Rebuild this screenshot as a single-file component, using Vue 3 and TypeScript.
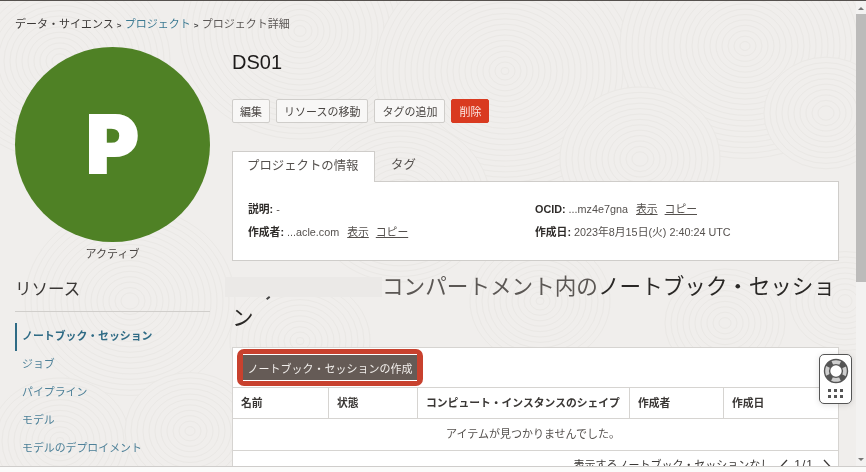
<script setup lang="ts">
// swirls of the page's background texture: each one paints over the ones before it
const swirls = [
  { x: 60, y: 60, r: 110 },
  { x: 300, y: 30, r: 120 },
  { x: 505, y: 70, r: 130 },
  { x: 745, y: 45, r: 125 },
  { x: 826, y: 112, r: 62 },
  { x: 640, y: 158, r: 80 },
  { x: 400, y: 200, r: 90 },
  { x: 130, y: 300, r: 105 },
  { x: 300, y: 340, r: 70 },
  { x: 60, y: 440, r: 70 },
  { x: 190, y: 430, r: 65 },
  { x: 725, y: 322, r: 60 },
  { x: 540, y: 300, r: 70 },
  { x: 845, y: 300, r: 55 }
]
const rings = swirls.flatMap((s) => {
  const out = []
  for (let r = s.r; r > 3; r -= 6) out.push({ cx: s.x, cy: s.y, rx: r, ry: r * 0.9 })
  return out
})

const navItems = ['ノートブック・セッション', 'ジョブ', 'パイプライン', 'モデル', 'モデルのデプロイメント']
const columns = [
  { label: '名前', width: 96 },
  { label: '状態', width: 89 },
  { label: 'コンピュート・インスタンスのシェイプ', width: 212 },
  { label: '作成者', width: 94 },
  { label: '作成日', width: 114 }
]
</script>

<template>
  <div class="screen">
    <div class="topline"></div>
    <div class="window">
      <div class="viewport">
        <svg class="texture" width="856" height="466" aria-hidden="true">
          <ellipse v-for="(c, i) in rings" :key="i" :cx="c.cx" :cy="c.cy" :rx="c.rx" :ry="c.ry" />
        </svg>

        <nav class="crumbs">
          データ・サイエンス<span class="sep">&gt;</span><a class="link">プロジェクト</a><span class="sep">&gt;</span><span class="muted">プロジェクト詳細</span>
        </nav>

        <div class="columns">
          <aside class="side">
            <div class="avatar">P</div>
            <div class="status">アクティブ</div>
            <h2 class="side-title">リソース</h2>
            <ul class="nav">
              <li v-for="(item, i) in navItems" :key="item" :class="{ active: i === 0 }">{{ item }}</li>
            </ul>
          </aside>

          <main class="content">
            <h1 class="title">DS01</h1>
            <div class="actions">
              <button class="btn">編集</button>
              <button class="btn">リソースの移動</button>
              <button class="btn">タグの追加</button>
              <button class="btn danger">削除</button>
            </div>

            <div class="tabs">
              <div class="tab current">プロジェクトの情報</div>
              <div class="tab">タグ</div>
            </div>
            <div class="info">
              <div class="info-col">
                <p><b>説明:</b> -</p>
                <p><b>作成者:</b> ...acle.com<a class="act first">表示</a><a class="act">コピー</a></p>
              </div>
              <div class="info-col">
                <p><b>OCID:</b> ...mz4e7gna<a class="act first">表示</a><a class="act">コピー</a></p>
                <p><b>作成日:</b> 2023年8月15日(火) 2:40:24 UTC</p>
              </div>
            </div>

            <h2 class="heading"><span class="redact"><i></i></span>コンパートメント内の<span class="dark">ノートブック・セッション</span></h2>

            <section class="table-card">
              <div class="toolbar">
                <div class="highlight">
                  <button class="create">ノートブック・セッションの作成</button>
                </div>
              </div>
              <div class="row head">
                <div v-for="c in columns" :key="c.label" class="cell" :style="{ width: c.width + 'px' }">{{ c.label }}</div>
              </div>
              <div class="row empty">アイテムが見つかりませんでした。</div>
              <div class="pager">
                表示するノートブック・セッションなし
                <svg class="chev" width="12" height="12" viewBox="0 0 12 12"><path d="M9 1 3 7.5" /></svg>
                <span class="count">1/1</span>
                <svg class="chev" width="12" height="12" viewBox="0 0 12 12"><path d="M3 1 9 7.5" /></svg>
              </div>
            </section>
          </main>
        </div>

        <div class="help" aria-hidden="true">
          <svg width="26" height="26" viewBox="0 0 26 26">
            <circle cx="13" cy="13" r="9" fill="none" stroke="#cfcfcf" stroke-width="5" />
            <circle class="wedges" cx="13" cy="13" r="9" />
            <circle cx="13" cy="13" r="11.5" fill="none" stroke="#555" stroke-width="1.4" />
            <circle cx="13" cy="13" r="6.4" fill="none" stroke="#555" stroke-width="1.4" />
          </svg>
          <div class="dots"><span v-for="n in 6" :key="n"></span></div>
        </div>
      </div>

      <div class="scrollbar">
        <span class="arrow up"></span>
        <div class="track"><div class="thumb"></div></div>
        <span class="arrow down"></span>
      </div>
    </div>
    <div class="bottom"></div>
  </div>
</template>

<style>
html, body { margin: 0; background: #f0eeec; }
</style>

<style scoped>
.screen {
  width: 866px;
  height: 472px;
  display: flex;
  flex-direction: column;
  overflow: hidden;
  font-family: "Liberation Sans", "Noto Sans CJK JP", sans-serif;
  color: #2f2c2a;
  filter: blur(0.4px);
}
.topline { height: 1px; background: #55514e; flex: none; }
.window { flex: 1; display: flex; min-height: 0; }
.bottom { height: 5px; flex: none; background: #fbfbfa; border-top: 1px solid #cfcdcb; }

.viewport {
  position: relative;
  flex: 1;
  overflow: hidden;
  background: #f0eeec;
  padding: 0 17px 0 15px;
  min-width: 0;
}
.texture { position: absolute; left: 0; top: 0; }
.texture ellipse { fill: #f0eeec; stroke: #eae8e5; stroke-width: 1; }

.crumbs {
  position: relative;
  height: 15px;
  margin-top: 16px;
  font-size: 11px;
  line-height: 15px;
  color: #3b3836;
  white-space: nowrap;
}
.sep { display: inline-block; width: 11px; text-align: center; font-size: 8px; font-weight: 700; color: #444; }
.link { color: #3c7a92; }
.muted { color: #5c5856; }

.columns { position: relative; display: flex; gap: 22px; margin-top: 15px; }
.side { width: 195px; flex: none; }
.avatar {
  width: 195px;
  height: 195px;
  border-radius: 50%;
  background: #4f8125;
  color: #fff;
  font-family: Inter, "Liberation Sans", sans-serif;
  font-size: 80px;
  font-weight: 900;
  -webkit-text-stroke: 2px #fff;
  line-height: 193px;
  text-align: center;
}
.status { margin-top: 5px; text-align: center; font-size: 11px; line-height: 15px; color: #4a4643; }
.side-title {
  margin: 15px 0 0;
  padding-bottom: 10px;
  border-bottom: 1px solid #d0cecb;
  font-size: 16.5px;
  font-weight: 400;
  line-height: 24px;
  color: #3a3735;
}
.nav { list-style: none; margin: 11px 0 0; padding: 0; }
.nav li {
  height: 28px;
  padding-left: 6px;
  font-size: 10.9px;
  line-height: 27px;
  color: #4d8098;
  border-left: 1px solid transparent;
}
.nav li.active { color: #2f6b85; font-weight: 700; border-left: 2px solid #2f6b85; padding-left: 5px; }

.content { width: 607px; flex: none; }
.title { margin: 0; font-size: 20px; font-weight: 400; line-height: 30px; color: #1d1b1a; }
.actions { display: flex; gap: 6px; margin-top: 22px; }
.btn {
  height: 24px;
  padding: 0 7px;
  font: inherit;
  font-size: 11px;
  color: #4a4643;
  background: #f8f7f6;
  border: 1px solid #cfcdca;
  border-radius: 2px;
}
.btn.danger { background: #d93a20; border-color: #d93a20; color: #fbe7e2; }

.tabs { display: flex; margin-top: 28px; }
.tab { height: 31px; padding: 0 16px; font-size: 12.4px; line-height: 29px; color: #55514e; white-space: nowrap; }
.tab.current {
  width: 143px;
  padding: 0 14px;
  box-sizing: border-box;
  background: #fff;
  border: 1px solid #cfcdca;
  border-bottom: 0;
  position: relative;
  z-index: 1;
}
.info {
  display: flex;
  height: 80px;
  box-sizing: border-box;
  margin-top: -1px;
  padding: 20px 15px 0;
  background: #fff;
  border: 1px solid #cfcdca;
  font-size: 10.8px;
}
.info-col:first-child { width: 287px; flex: none; }
.info p { margin: 0 0 8px; line-height: 15px; color: #55514e; }
.info b { color: #2f2c2a; }
.act { margin-left: 7px; color: #55514e; text-decoration: underline; }
.act.first { margin-left: 8px; }

.heading {
  margin: 10px 0 0;
  font-size: 21.6px;
  font-weight: 400;
  line-height: 31px;
  color: #5b5754;
}
.dark { color: #2a2826; }
.redact {
  position: relative;
  display: inline-block;
  width: 150px;
  height: 20px;
  vertical-align: -3px;
}
.redact::before { content: ""; position: absolute; inset: 0 0 0 -7px; background: #ebe9e7; }
.redact i { position: absolute; left: 34px; top: 20px; width: 4px; height: 1.5px; background: #444; transform: rotate(-40deg); }

.table-card {
  margin-top: 14px;
  background: #fff;
  border: 1px solid #d6d4d1;
  border-bottom: 0;
  height: 120px;
  overflow: hidden;
}
.toolbar { height: 39px; padding: 1px 0 0 4px; box-sizing: border-box; }
.highlight {
  width: 186px;
  height: 37px;
  box-sizing: border-box;
  border: 5px solid #c8412e;
  border-width: 5px 6px;
  border-radius: 7px;
  display: flex;
}
.create {
  width: 100%;
  height: 100%;
  padding: 0;
  background: #655b56;
  color: #f2efec;
  border: 0;
  border-top: 1px solid #fff;
  border-bottom: 1px solid #fff;
  font: inherit;
  font-size: 11px;
  white-space: nowrap;
}
.row { height: 32px; border-top: 1px solid #d6d4d1; box-sizing: border-box; font-size: 10.8px; }
.head { display: flex; height: 31px; }
.cell { box-sizing: border-box; padding: 0 8px; font-weight: 700; line-height: 30px; border-right: 1px solid #d6d4d1; color: #3a3735; white-space: nowrap; }
.cell:last-child { border-right: 0; }
.empty { text-align: center; line-height: 30px; color: #55514e; font-size: 11px; padding-right: 5px; }
.pager {
  border-top: 1px solid #d6d4d1;
  padding: 6px 5px 0 0;
  display: flex;
  justify-content: flex-end;
  align-items: center;
  gap: 4px;
  font-size: 11px;
  line-height: 16px;
  color: #3a3735;
  white-space: nowrap;
}
.chev { margin-left: 3px; fill: none; stroke: #3a3735; stroke-width: 1.3; }
.count { font-size: 12px; letter-spacing: 1px; }

.help {
  position: absolute;
  left: 819px;
  top: 353px;
  width: 33px;
  height: 50px;
  box-sizing: border-box;
  padding-top: 3px;
  background: #fff;
  border: 1.5px solid #555;
  border-radius: 5px;
  box-shadow: 0 1px 6px rgba(0, 0, 0, 0.12);
  display: flex;
  flex-direction: column;
  align-items: center;
}
/* dark diagonal bands of the lifebuoy */
.wedges {
  fill: none;
  stroke: #555;
  stroke-width: 5;
  stroke-dasharray: 6 8.14;
  stroke-dashoffset: 3;
  transform: rotate(45deg);
  transform-origin: 13px 13px;
}
.dots { display: grid; grid-template-columns: repeat(3, 3px); gap: 3px; margin-top: 5px; }
.dots span { width: 3px; height: 3px; background: #555; }

.scrollbar { width: 10px; flex: none; background: #f3f2f1; display: flex; flex-direction: column; align-items: center; }
.arrow { width: 0; height: 0; border-left: 3px solid transparent; border-right: 3px solid transparent; flex: none; }
.arrow.up { border-bottom: 3px solid #777; margin: 6px 0 4px; }
.arrow.down { border-top: 3px solid #777; margin: 4px 0 5px; }
.track { flex: 1; width: 100%; }
.thumb { height: 268px; background: #bcbbba; }
</style>
